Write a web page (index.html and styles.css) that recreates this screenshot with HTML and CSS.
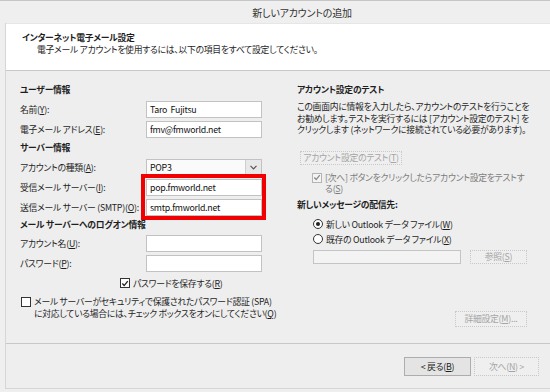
FILE: index.html
```html
<!DOCTYPE html>
<html lang="ja">
<head>
    <meta charset="UTF-8">
    <title>新しいアカウントの追加</title>
    <link rel="stylesheet" href="styles.css">
</head>
<body>
    <div class="titlebar">新しいアカウントの追加</div>
    <div class="dialog">
        <div class="header">
            <div class="header-title">インターネット電子メール設定</div>
            <div class="header-sub">電子メール アカウントを使用するには、以下の項目をすべて設定してください。</div>
        </div>

        <div class="content">
            <div class="col-left">
                <div class="section">ユーザー情報</div>
                <div class="field"><span class="label">名前(<u>Y</u>):</span><div class="input">Taro&nbsp;&nbsp;Fujitsu</div></div>
                <div class="field"><span class="label">電子メール アドレス(<u>E</u>):</span><div class="input">fmv@fmworld.net</div></div>

                <div class="section">サーバー情報</div>
                <div class="field"><span class="label">アカウントの種類(<u>A</u>):</span>
                    <div class="select"><span class="select-text">POP3</span>
                        <span class="select-arrow"><svg width="7" height="5" viewBox="0 0 7 5"><path d="M0.5 0.8 L3.5 3.8 L6.5 0.8" fill="none" stroke="#555" stroke-width="1.2"/></svg></span>
                    </div>
                </div>
                <div class="field"><span class="label">受信メール サーバー(<u>I</u>):</span><div class="input">pop.fmworld.net</div></div>
                <div class="field"><span class="label">送信メール サーバー (SMTP)(<u>O</u>):</span><div class="input">smtp.fmworld.net</div></div>

                <div class="section short">メール サーバーへのログオン情報</div>
                <div class="field"><span class="label">アカウント名(<u>U</u>):</span><div class="input"></div></div>
                <div class="field"><span class="label">パスワード(<u>P</u>):</span><div class="input"></div></div>

                <div class="check-row save-pass">
                    <span class="checkbox"><svg width="9" height="9" viewBox="0 0 9 9"><path d="M1.5 4.5 L3.6 6.8 L7.6 1.8" fill="none" stroke="#222" stroke-width="1.5"/></svg></span>
                    <span>パスワードを保存する(<u>R</u>)</span>
                </div>
                <div class="check-row spa">
                    <span class="checkbox"></span>
                    <span>メール サーバーがセキュリティで保護されたパスワード認証 (SPA)<br>に対応している場合には、チェック ボックスをオンにしてください(<u>Q</u>)</span>
                </div>

                <!-- highlight over the two server fields -->
                <div class="highlight"></div>
            </div>

            <div class="col-right">
                <div class="section">アカウント設定のテスト</div>
                <p class="note">この画面内に情報を入力したら、アカウントのテストを行うことを<br>お勧めします。テストを実行するには [アカウント設定のテスト] を<br>クリックします (ネットワークに接続されている必要があります)。</p>
                <div class="btn disabled test-btn">アカウント設定のテスト(<u>T</u>)</div>
                <div class="check-row auto-test">
                    <span class="checkbox off"><svg width="9" height="9" viewBox="0 0 9 9"><path d="M1.5 4.5 L3.6 6.8 L7.6 1.8" fill="none" stroke="#8a8a8a" stroke-width="1.5"/></svg></span>
                    <span>[次へ] ボタンをクリックしたらアカウント設定をテストす<br>る(<u>S</u>)</span>
                </div>

                <div class="section dest">新しいメッセージの配信先:</div>
                <div class="radio-row first"><span class="radio on"></span><span>新しい Outlook データ ファイル(<u>W</u>)</span></div>
                <div class="radio-row"><span class="radio"></span><span>既存の Outlook データ ファイル(<u>X</u>)</span></div>
                <div class="browse-row">
                    <div class="path-input"></div>
                    <div class="btn disabled browse-btn">参照(<u>S</u>)</div>
                </div>
                <div class="btn disabled more-btn">詳細設定(<u>M</u>)...</div>
            </div>
        </div>

        <div class="footer">
            <div class="btn back-btn">&lt; 戻る(<u>B</u>)</div>
            <div class="btn disabled next-btn">次へ(<u>N</u>) &gt;</div>
        </div>
    </div>
</body>
</html>
```

FILE: styles.css
```css
* { box-sizing: border-box; }
body { margin: 0; width: 550px; height: 392px; overflow: hidden; background: #efefef; border-top: 1px solid #c6c6c6; font-family: "Noto Sans CJK JP", "Noto Sans", sans-serif; font-size: 8.8px; letter-spacing: -0.25px; color: #1e1e1e; font-feature-settings: "palt"; }
u { text-decoration: underline; }
p { margin: 0; }

.titlebar { height: 22px; display: flex; align-items: center; justify-content: center; padding-left: 54px; font-size: 10px; letter-spacing: -0.2px; color: #333; }
.dialog { margin-left: 5px; border-left: 1px solid #d6d6d6; border-bottom: 1px solid #d6d6d6; }

.header { height: 48px; background: #fff; border-top: 1px solid #e6e6e6; border-bottom: 1px solid #c8c8c8; padding: 8px 0 0 16px; }
.header-title { font-weight: bold; line-height: 12px; }
.header-sub { line-height: 11px; padding-left: 15px; }

.content { height: 272px; display: flex; gap: 21px; padding: 10px 0 0 14px; background: #eeeeee; }
.col-left { width: 256px; position: relative; }
.col-right { width: 230px; display: flex; flex-direction: column; }

.section { height: 18px; line-height: 18px; font-weight: bold; white-space: nowrap; }
.section.short { height: 16px; line-height: 16px; }
.field { height: 20px; display: flex; align-items: center; }
.label { width: 126px; white-space: nowrap; }
.input { width: 116px; height: 17px; background: #fff; border: 1px solid #c2c2c2; padding: 0 3px; line-height: 15px; color: #111; white-space: nowrap; }

.select { width: 116px; height: 17px; display: flex; background: #fafafa; border: 1px solid #c2c2c2; }
.select-text { flex: 1; padding-left: 3px; line-height: 15px; color: #111; }
.select-arrow { width: 16px; display: flex; align-items: center; justify-content: center; background: #e8e8e8; border-left: 1px solid #cfcfcf; }

.highlight { position: absolute; left: 121px; top: 93px; width: 125px; height: 46px; border: 4px solid #f00000; }

.check-row { display: flex; align-items: flex-start; gap: 3px; white-space: nowrap; }
.checkbox { width: 10px; height: 10px; flex: none; background: #fff; border: 1px solid #333; display: flex; align-items: center; justify-content: center; }
.checkbox.off { border-color: #b4b4b4; background: #f4f4f4; }
.save-pass { height: 20px; align-items: center; padding-left: 100px; }
.spa { margin-top: 3px; line-height: 12px; padding-left: 1px; }
.spa .checkbox { margin-top: 1px; }

.note { margin-top: 2px; line-height: 11.5px; white-space: nowrap; }

.btn { display: flex; align-items: center; justify-content: center; background: #e4e4e4; border: 1px solid #adadad; white-space: nowrap; }
.btn.disabled { background: #efefef; border: 1px dotted #c8c8c8; color: #a5a5a5; }
.test-btn { width: 102px; height: 14px; margin: 15px 0 0 3px; }

.auto-test { margin-top: 7px; padding-left: 15px; line-height: 11.5px; color: #7c7c7c; }
.auto-test .checkbox { margin-top: 1px; }

.section.dest { height: 16px; line-height: 16px; margin-top: 2px; }
.radio-row { height: 15px; display: flex; align-items: center; gap: 3px; padding-left: 16px; white-space: nowrap; }
.radio-row.first { margin-top: 4px; }
.radio { width: 10px; height: 10px; border: 1px solid #333; border-radius: 50%; background: #fff; display: flex; align-items: center; justify-content: center; }
.radio.on::after { content: ""; width: 4px; height: 4px; border-radius: 50%; background: #222; }

.browse-row { display: flex; gap: 9px; margin-top: 3px; padding-left: 16px; }
.path-input { width: 148px; height: 14px; background: #f3f3f3; border: 1px solid #c4c4c4; }
.browse-btn { width: 57px; height: 14px; }
.more-btn { width: 72px; height: 16px; margin-top: 47px; align-self: flex-end; }

.footer { height: 45px; border-top: 1px solid #c8c8c8; display: flex; justify-content: flex-end; gap: 3px; padding: 13px 11px 0 0; background: #eeeeee; }
.back-btn { width: 67px; height: 19px; }
.next-btn { width: 65px; height: 19px; }
```
